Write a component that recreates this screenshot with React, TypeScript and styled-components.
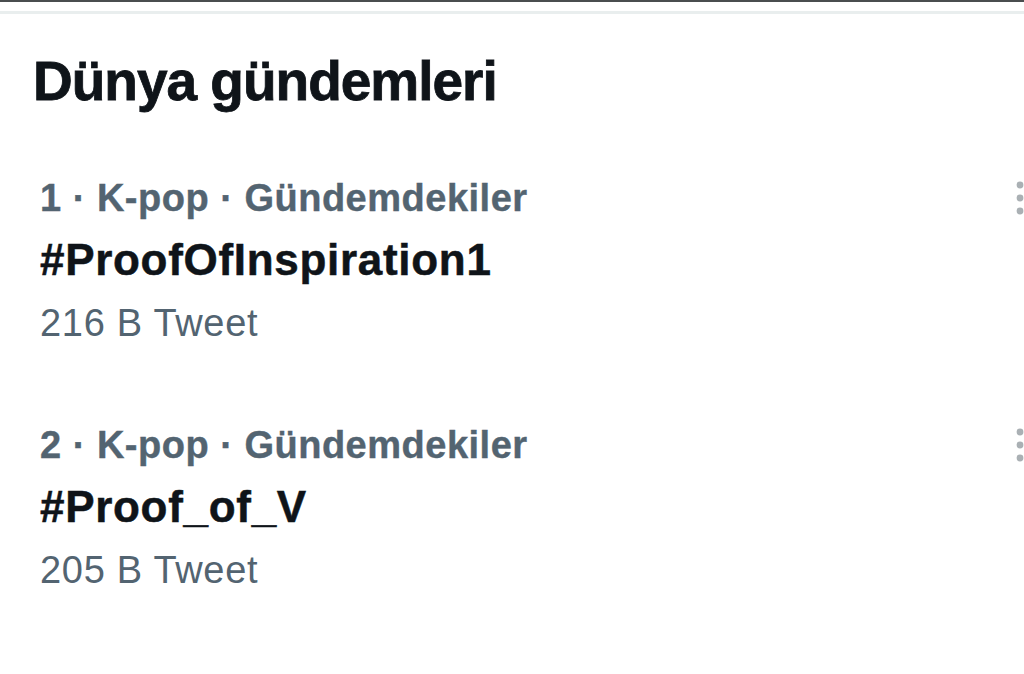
import React from 'react';
import styled, { createGlobalStyle } from 'styled-components';

const GlobalStyle = createGlobalStyle`
    html, body {
        margin: 0;
        padding: 0;
        background: #ffffff;
        overflow: hidden;
    }
    body {
        font-family: 'Liberation Sans', Arial, sans-serif;
        -webkit-font-smoothing: antialiased;
    }
`;

const Page = styled.div`
    width: 1024px;
    height: 674px;
    background: #ffffff;
    border-top: 2px solid #4a4d4f;
    box-sizing: border-box;
    overflow: hidden;
`;

const TopBorder = styled.div`
    height: 3px;
    margin-top: 9px;
    background: #e9eeee;
`;

const Heading = styled.h2`
    margin: 0;
    padding: 38px 0 0 33px;
    font-size: 55px;
    line-height: 58px;
    font-weight: 700;
    letter-spacing: -1px;
    color: #0f1419;
    -webkit-text-stroke: 0.8px #0f1419;
`;

const TrendList = styled.div`
    display: flex;
    flex-direction: column;
    gap: 57px;
    padding-top: 56px;
`;

const Trend = styled.div`
    display: flex;
    justify-content: space-between;
    align-items: flex-start;
    padding-left: 40px;
`;

const TrendText = styled.div`
    display: flex;
    flex-direction: column;
`;

const Meta = styled.div`
    font-size: 38px;
    line-height: 64px;
    font-weight: 700;
    letter-spacing: 0.5px;
    color: #536471;
    -webkit-text-stroke: 0.4px #536471;
`;

const Tag = styled.div`
    font-size: 44px;
    line-height: 60px;
    font-weight: 700;
    letter-spacing: 0.7px;
    color: #0f1419;
    -webkit-text-stroke: 0.5px #0f1419;
`;

const Count = styled.div`
    font-size: 38px;
    line-height: 66px;
    letter-spacing: 0.7px;
    color: #536471;
`;

const MoreButton = styled.div`
    width: 14px;
    margin-top: 12px;
    margin-right: -2px;
    color: #aab0b4;
    flex-shrink: 0;
`;

const MoreIcon = () => (
    <svg width="14" height="40" viewBox="0 0 14 40">
        <circle cx="8" cy="7" r="3.4" fill="currentColor" />
        <circle cx="8" cy="20" r="3.4" fill="currentColor" />
        <circle cx="8" cy="33" r="3.4" fill="currentColor" />
    </svg>
);

const trends = [
    { rank: 1, category: 'K-pop', tag: '#ProofOfInspiration1', count: '216 B Tweet' },
    { rank: 2, category: 'K-pop', tag: '#Proof_of_V', count: '205 B Tweet' },
];

export default function App() {
    return (
        <>
            <GlobalStyle />
            <Page>
                <TopBorder />
                <Heading>Dünya gündemleri</Heading>
                <TrendList>
                    {trends.map((t) => (
                        <Trend key={t.rank}>
                            <TrendText>
                                <Meta>
                                    {t.rank} · {t.category} · Gündemdekiler
                                </Meta>
                                <Tag>{t.tag}</Tag>
                                <Count>{t.count}</Count>
                            </TrendText>
                            <MoreButton>
                                <MoreIcon />
                            </MoreButton>
                        </Trend>
                    ))}
                </TrendList>
            </Page>
        </>
    );
}
